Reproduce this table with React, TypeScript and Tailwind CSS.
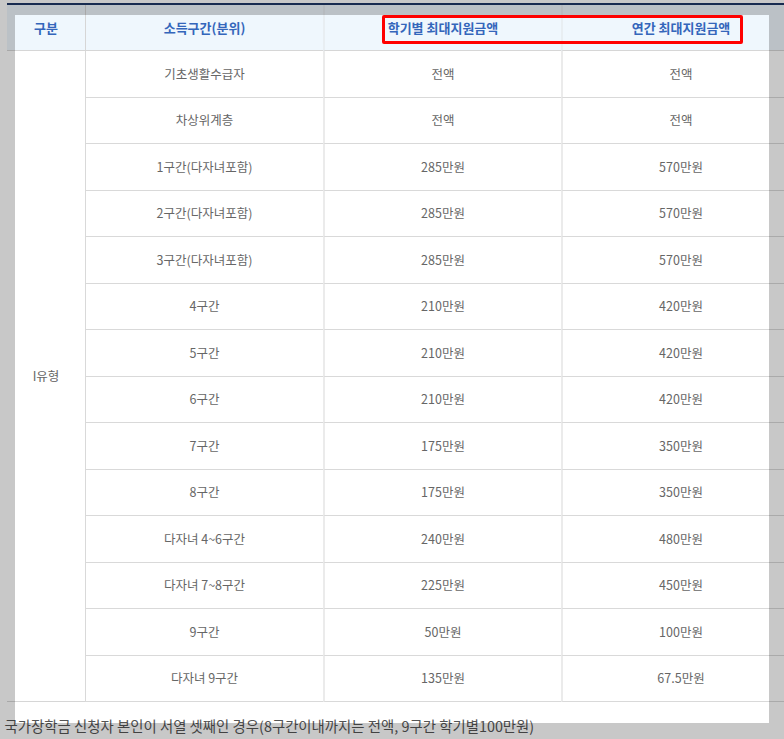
const rows: [string, string, string][] = [
  ["기초생활수급자", "전액", "전액"],
  ["차상위계층", "전액", "전액"],
  ["1구간(다자녀포함)", "285만원", "570만원"],
  ["2구간(다자녀포함)", "285만원", "570만원"],
  ["3구간(다자녀포함)", "285만원", "570만원"],
  ["4구간", "210만원", "420만원"],
  ["5구간", "210만원", "420만원"],
  ["6구간", "210만원", "420만원"],
  ["7구간", "175만원", "350만원"],
  ["8구간", "175만원", "350만원"],
  ["다자녀 4~6구간", "240만원", "480만원"],
  ["다자녀 7~8구간", "225만원", "450만원"],
  ["9구간", "50만원", "100만원"],
  ["다자녀 9구간", "135만원", "67.5만원"],
];

const font = { fontFamily: '"Noto Sans CJK KR", "Noto Sans", sans-serif' };

export default function App() {
  return (
    <div className="relative w-[784px] h-[739px] overflow-hidden bg-white" style={font}>
      <div className="pt-[3px] pl-[7px]">
        <table className="w-[792px] table-fixed border-separate border-spacing-0 border-t-2 border-[#1f3866] text-[12.5px]">
          <colgroup>
            <col className="w-[78px]" />
            <col className="w-[238px]" />
            <col className="w-[238px]" />
            <col className="w-[238px]" />
          </colgroup>
          <thead>
            <tr className="h-[46px] bg-[#eff7fd] text-[13px] text-[#3466bb]">
              <th className="border-b border-[#d6d6d6] font-bold">구분</th>
              <th className="border-b border-l border-[#d6d6d6] font-bold">소득구간(분위)</th>
              <th className="border-b border-l-2 border-b-[#d6d6d6] border-l-[#e8eef2] font-bold">학기별 최대지원금액</th>
              <th className="border-b border-l-2 border-b-[#d6d6d6] border-l-[#e8eef2] font-bold">연간 최대지원금액</th>
            </tr>
          </thead>
          <tbody className="text-[#666666]">
            {rows.map((r, i) => (
              <tr key={i} className={i % 2 === 0 ? "h-[47px]" : "h-[46px]"}>
                {i === 0 && (
                  <td rowSpan={rows.length} className="border-b border-[#d6d6d6] text-center align-middle">
                    I유형
                  </td>
                )}
                <td className="border-b border-l border-[#d9d9d9] text-center">{r[0]}</td>
                <td className="border-b border-l-2 border-b-[#d9d9d9] border-l-[#ebebeb] text-center">{r[1]}</td>
                <td className="border-b border-l-2 border-b-[#d9d9d9] border-l-[#ebebeb] text-center">{r[2]}</td>
              </tr>
            ))}
          </tbody>
        </table>
        <p className="-ml-[20px] mt-[13px] whitespace-nowrap text-[14.4px] text-[#555555]">
          ※ 국가장학금 신청자 본인이 서열 셋째인 경우(8구간이내까지는 전액, 9구간 학기별100만원)
        </p>
      </div>

      {/* dimmed capture overlay */}
      <div className="pointer-events-none absolute left-[15px] top-[15px] h-[708px] w-[754px] shadow-[0_0_0_1200px_rgba(0,0,0,0.215)]" />
      {/* red highlight */}
      <div className="pointer-events-none absolute left-[382px] top-[15px] h-[29px] w-[361px] rounded-[2px] border-[3px] border-[#ff0000]" />
    </div>
  );
}
